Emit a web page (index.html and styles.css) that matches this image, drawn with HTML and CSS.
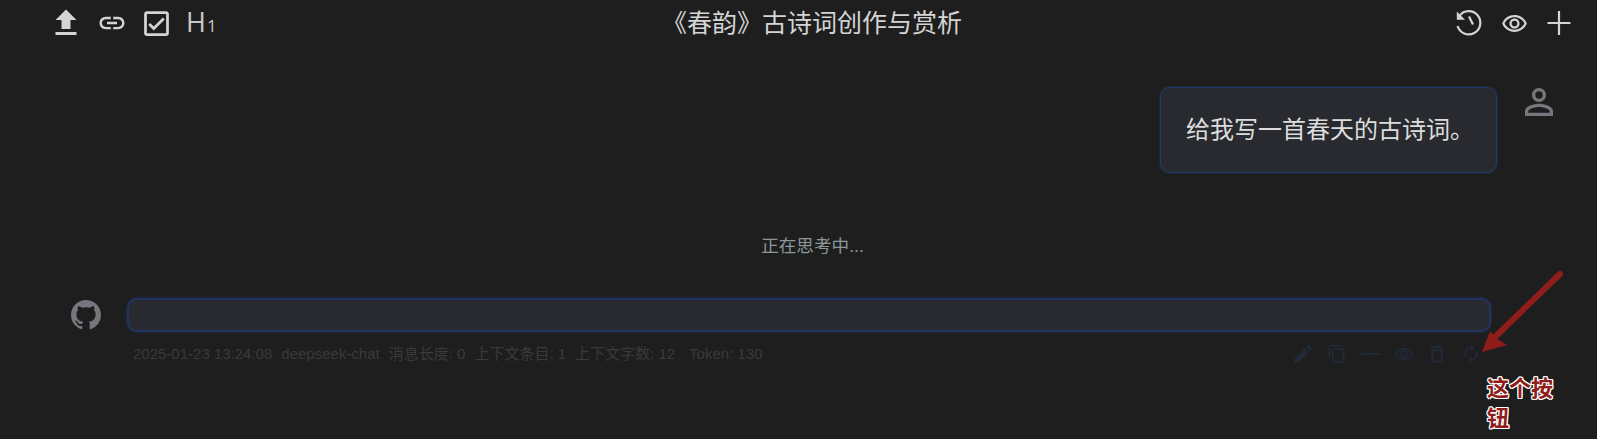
FILE: index.html
```html
<!DOCTYPE html>
<html lang="zh">
<head>
    <meta charset="utf-8">
    <title>《春韵》古诗词创作与赏析</title>
    <link rel="stylesheet" href="styles.css">
</head>
<body>
    <header class="topbar">
        <div class="tools">
            <svg class="icon-upload" viewBox="0 0 24 24"><path d="M9 16h6v-6h4l-7-7-7 7h4zm-4 2h14v2H5z"/></svg>
            <svg class="icon-link" viewBox="0 0 24 24"><path d="M3.9 12c0-1.71 1.39-3.1 3.1-3.1h4V7H7c-2.76 0-5 2.24-5 5s2.24 5 5 5h4v-1.9H7c-1.71 0-3.1-1.39-3.1-3.1zM8 13h8v-2H8v2zm9-6h-4v1.9h4c1.71 0 3.1 1.39 3.1 3.1s-1.39 3.1-3.1 3.1h-4V17h4c2.76 0 5-2.24 5-5s-2.24-5-5-5z"/></svg>
            <svg class="icon-check" viewBox="0 0 24 24"><path d="M19 3H5c-1.1 0-2 .9-2 2v14c0 1.1.9 2 2 2h14c1.1 0 2-.9 2-2V5c0-1.1-.9-2-2-2zm0 16H5V5h14v14zM17.99 9l-1.41-1.42-6.59 6.59-2.58-2.57-1.42 1.41 4 3.99z"/></svg>
            <span class="heading-tool">H<small>1</small></span>
        </div>
        <h1 class="title">《春韵》古诗词创作与赏析</h1>
        <div class="actions">
            <svg class="icon-line" viewBox="0 0 30 30"><path d="M5.500 7.800A11.600 11.600 0 1 1 3.600 18"/><path d="M15 8.500l4 8"/><path class="head" d="M2.800 3.400v8.400h8.200z"/></svg>
            <svg class="icon-eye" viewBox="0 0 24 24"><path d="M12 6.500c3.790 0 7.170 2.130 8.820 5.500-1.650 3.370-5.020 5.500-8.820 5.500S4.830 15.370 3.180 12C4.830 8.630 8.210 6.500 12 6.500m0-2C7 4.500 2.730 7.610 1 12c1.730 4.390 6 7.500 11 7.500s9.270-3.110 11-7.500c-1.730-4.390-6-7.500-11-7.500zm0 5a2.500 2.500 0 0 1 0 5 2.500 2.500 0 0 1 0-5m0-2c-2.480 0-4.500 2.020-4.500 4.500s2.020 4.500 4.500 4.500 4.500-2.020 4.500-4.500-2.020-4.500-4.500-4.500z"/></svg>
            <svg class="icon-line" viewBox="0 0 30 30"><path d="M15 3v24M3.500 15h23"/></svg>
        </div>
    </header>

    <main class="chat">
        <div class="msg-user">
            <div class="bubble">给我写一首春天的古诗词。</div>
            <svg class="avatar-user" viewBox="0 0 24 24"><path d="M12 5.900a2.100 2.100 0 1 1 0 4.200 2.100 2.100 0 0 1 0-4.200m0 9c2.970 0 6.100 1.460 6.100 2.100v1.100H5.900V17c0-.640 3.130-2.100 6.100-2.100M12 4C9.790 4 8 5.790 8 8s1.790 4 4 4 4-1.790 4-4-1.790-4-4-4zm0 9c-2.670 0-8 1.340-8 4v3h16v-3c0-2.660-5.330-4-8-4z"/></svg>
        </div>

        <p class="thinking">正在思考中...</p>

        <div class="msg-bot">
            <svg class="avatar-bot" viewBox="0 0 16 16"><path d="M8 0C3.580 0 0 3.580 0 8c0 3.540 2.290 6.530 5.470 7.590.400.070.550-.170.550-.380 0-.190-.010-.820-.010-1.490-2.010.370-2.530-.490-2.690-.940-.090-.230-.480-.940-.820-1.130-.280-.150-.680-.520-.010-.530.630-.010 1.080.580 1.230.820.720 1.210 1.870.870 2.330.660.070-.520.280-.870.510-1.070-1.780-.200-3.640-.890-3.640-3.950 0-.870.310-1.590.820-2.150-.080-.200-.360-1.020.080-2.120 0 0 .670-.210 2.200.820.640-.180 1.320-.270 2-.270.680 0 1.360.090 2 .270 1.530-1.040 2.200-.820 2.200-.820.440 1.100.160 1.920.080 2.120.510.560.820 1.270.820 2.150 0 3.070-1.870 3.750-3.650 3.950.290.250.540.730.540 1.480 0 1.070-.010 1.930-.010 2.200 0 .210.150.460.550.380A8.013 8.013 0 0016 8c0-4.420-3.580-8-8-8z"/></svg>
            <div class="bot-body">
                <div class="bubble bubble-empty"></div>
                <div class="meta">
                    <div class="meta-text">
                        <span>2025-01-23 13:24:08</span>
                        <span>deepseek-chat</span>
                        <span>消息长度: 0</span>
                        <span>上下文条目: 1</span>
                        <span>上下文字数: 12</span>
                        <span class="token">Token: 130</span>
                    </div>
                    <div class="meta-icons">
                        <svg viewBox="2 2 20 20"><path d="M3 17.250V21h3.750L17.810 9.940l-3.750-3.750L3 17.250zM20.710 7.040c.390-.390.390-1.020 0-1.410l-2.340-2.340c-.390-.390-1.020-.390-1.410 0l-1.830 1.830 3.750 3.750 1.830-1.830z"/></svg>
                        <svg viewBox="0 0 24 24"><path d="M16 1H4c-1.100 0-2 .900-2 2v14h2V3h12V1zm3 4H8c-1.100 0-2 .900-2 2v14c0 1.100.900 2 2 2h11c1.100 0 2-.900 2-2V7c0-1.100-.900-2-2-2zm0 16H8V7h11v14z"/></svg>
                        <svg viewBox="0 0 24 24"><path d="M1 10.800h22v2.400H1z"/></svg>
                        <svg viewBox="0 0 24 24"><path d="M12 6.500c3.790 0 7.170 2.130 8.820 5.500-1.650 3.370-5.020 5.500-8.820 5.500S4.830 15.370 3.180 12C4.830 8.630 8.210 6.500 12 6.500m0-2C7 4.500 2.730 7.610 1 12c1.730 4.390 6 7.500 11 7.500s9.270-3.110 11-7.500c-1.730-4.390-6-7.500-11-7.500zm0 5a2.500 2.500 0 0 1 0 5 2.500 2.500 0 0 1 0-5m0-2c-2.480 0-4.500 2.020-4.500 4.500s2.020 4.500 4.500 4.500 4.500-2.020 4.500-4.500-2.020-4.500-4.500-4.500z"/></svg>
                        <svg viewBox="1.500 1.500 21 21"><path d="M16 9v10H8V9h8m-1.500-6h-5l-1 1H5v2h14V4h-3.500l-1-1zM18 7H6v12c0 1.100.900 2 2 2h8c1.100 0 2-.900 2-2V7z"/></svg>
                        <svg viewBox="0 0 24 24"><path d="M12 6v3l4-4-4-4v3c-4.420 0-8 3.580-8 8 0 1.570.460 3.030 1.240 4.260L6.700 14.800c-.450-.830-.700-1.790-.700-2.800 0-3.310 2.690-6 6-6zm6.760 1.740L17.300 9.200c.440.840.700 1.790.700 2.800 0 3.310-2.690 6-6 6v-3l-4 4 4 4v-3c4.420 0 8-3.580 8-8 0-1.570-.460-3.030-1.240-4.260z"/></svg>
                    </div>
                </div>
            </div>
        </div>
    </main>

    <!-- annotation drawn on top of the screenshot -->
    <svg class="arrow" viewBox="0 0 100 100"><path class="shaft" d="M82 4L14 70"/><path class="tip" d="M4 82L12 61 18 68 29 75z"/></svg>
    <div class="note">这个按钮</div>
</body>
</html>
```

FILE: styles.css
```css
html, body {
    height: 100%;
}
body {
    margin: 0;
    position: relative;
    overflow: hidden;
    background-color: #1e1e1e;
    color: #d8d8d8;
    font-family: "Liberation Sans", "Noto Sans CJK SC", sans-serif;
}
svg {
    display: block;
    flex: none;
    fill: currentColor;
}

.topbar {
    display: flex;
    align-items: center;
    height: 46px;
    padding: 0 23px 0 48px;
    color: #d4d4d4;
}
.tools {
    display: flex;
    align-items: center;
    gap: 13px;
    width: 614px;
}
.icon-upload {
    width: 36px;
    height: 36px;
}
.icon-link {
    width: 30px;
    height: 30px;
}
.icon-check {
    width: 33px;
    height: 33px;
}
.heading-tool {
    font-family: "Open Sans", sans-serif;
    font-size: 27px;
    line-height: 30px;
    margin-top: 2px;
    color: #c8c8c8;
}
.heading-tool small {
    font-size: 17px;
    margin-left: 1px;
}
.title {
    flex: 1;
    margin: 0;
    font-size: 25px;
    font-weight: 400;
    line-height: 46px;
}
.actions {
    display: flex;
    align-items: center;
    gap: 15px;
}
.actions .icon-line {
    width: 30px;
    height: 30px;
}
.actions .icon-eye {
    width: 27px;
    height: 27px;
    margin: 0 1.500px;
}
.icon-line {
    fill: none;
    stroke: currentColor;
    stroke-width: 2.200;
}
.icon-line .head {
    fill: currentColor;
    stroke: none;
}

.chat {
    padding-top: 41px;
}
.bubble {
    background-color: #282a2f;
    border: 1px solid #223a68;
    border-radius: 10px;
    box-shadow: 0 0 3px rgba(40, 70, 130, 0.6);
    box-sizing: border-box;
}
.msg-user {
    display: flex;
    justify-content: flex-end;
    align-items: flex-start;
    gap: 21px;
    padding-right: 37px;
}
.msg-user .bubble {
    width: 337px;
    height: 86px;
    padding: 0 25px;
    font-size: 24px;
    line-height: 84px;
    color: #dddddd;
    white-space: nowrap;
}
.avatar-user {
    width: 42px;
    height: 42px;
    margin-top: -6px;
    color: #74777c;
}

.thinking {
    margin: 62px 0 0;
    padding-left: 28px;
    text-align: center;
    font-size: 17.600px;
    line-height: 22px;
    color: #8b9799;
}

.msg-bot {
    display: flex;
    align-items: flex-start;
    gap: 26px;
    margin-top: 41px;
    padding: 0 106px 0 71px;
}
.avatar-bot {
    width: 30px;
    height: 30px;
    margin-top: 2px;
    color: #74777c;
}
.bot-body {
    flex: 1;
}
.bubble-empty {
    height: 34px;
    border-width: 2px;
    border-color: #20345f;
    border-radius: 10px;
}
.meta {
    display: flex;
    justify-content: space-between;
    align-items: center;
    height: 24px;
    margin-top: 10px;
    padding: 0 10px 0 6px;
}
.meta-text {
    display: flex;
    align-items: baseline;
    gap: 9px;
    margin-top: -3px;
    font-size: 15px;
    color: #3a3a3a;
}
.meta-text .token {
    margin-left: 5px;
}
.meta-icons {
    display: flex;
    gap: 13.600px;
    color: #212a39;
}
.meta-icons svg {
    width: 20px;
    height: 20px;
}

.arrow {
    position: absolute;
    left: 1478px;
    top: 270px;
    width: 100px;
    height: 100px;
    fill: #8f1d1a;
}
.arrow .shaft {
    fill: none;
    stroke: #8f1d1a;
    stroke-width: 6;
    stroke-linecap: round;
}
.note {
    position: absolute;
    left: 1487px;
    top: 374px;
    width: 68px;
    font-size: 22px;
    font-weight: 700;
    line-height: 29.500px;
    color: #8f1d1a;
    text-shadow: 1px 0 #fff, -1px 0 #fff, 0 1px #fff, 0 -1px #fff, 1px 1px #fff, -1px -1px #fff, 1px -1px #fff, -1px 1px #fff;
}
```
